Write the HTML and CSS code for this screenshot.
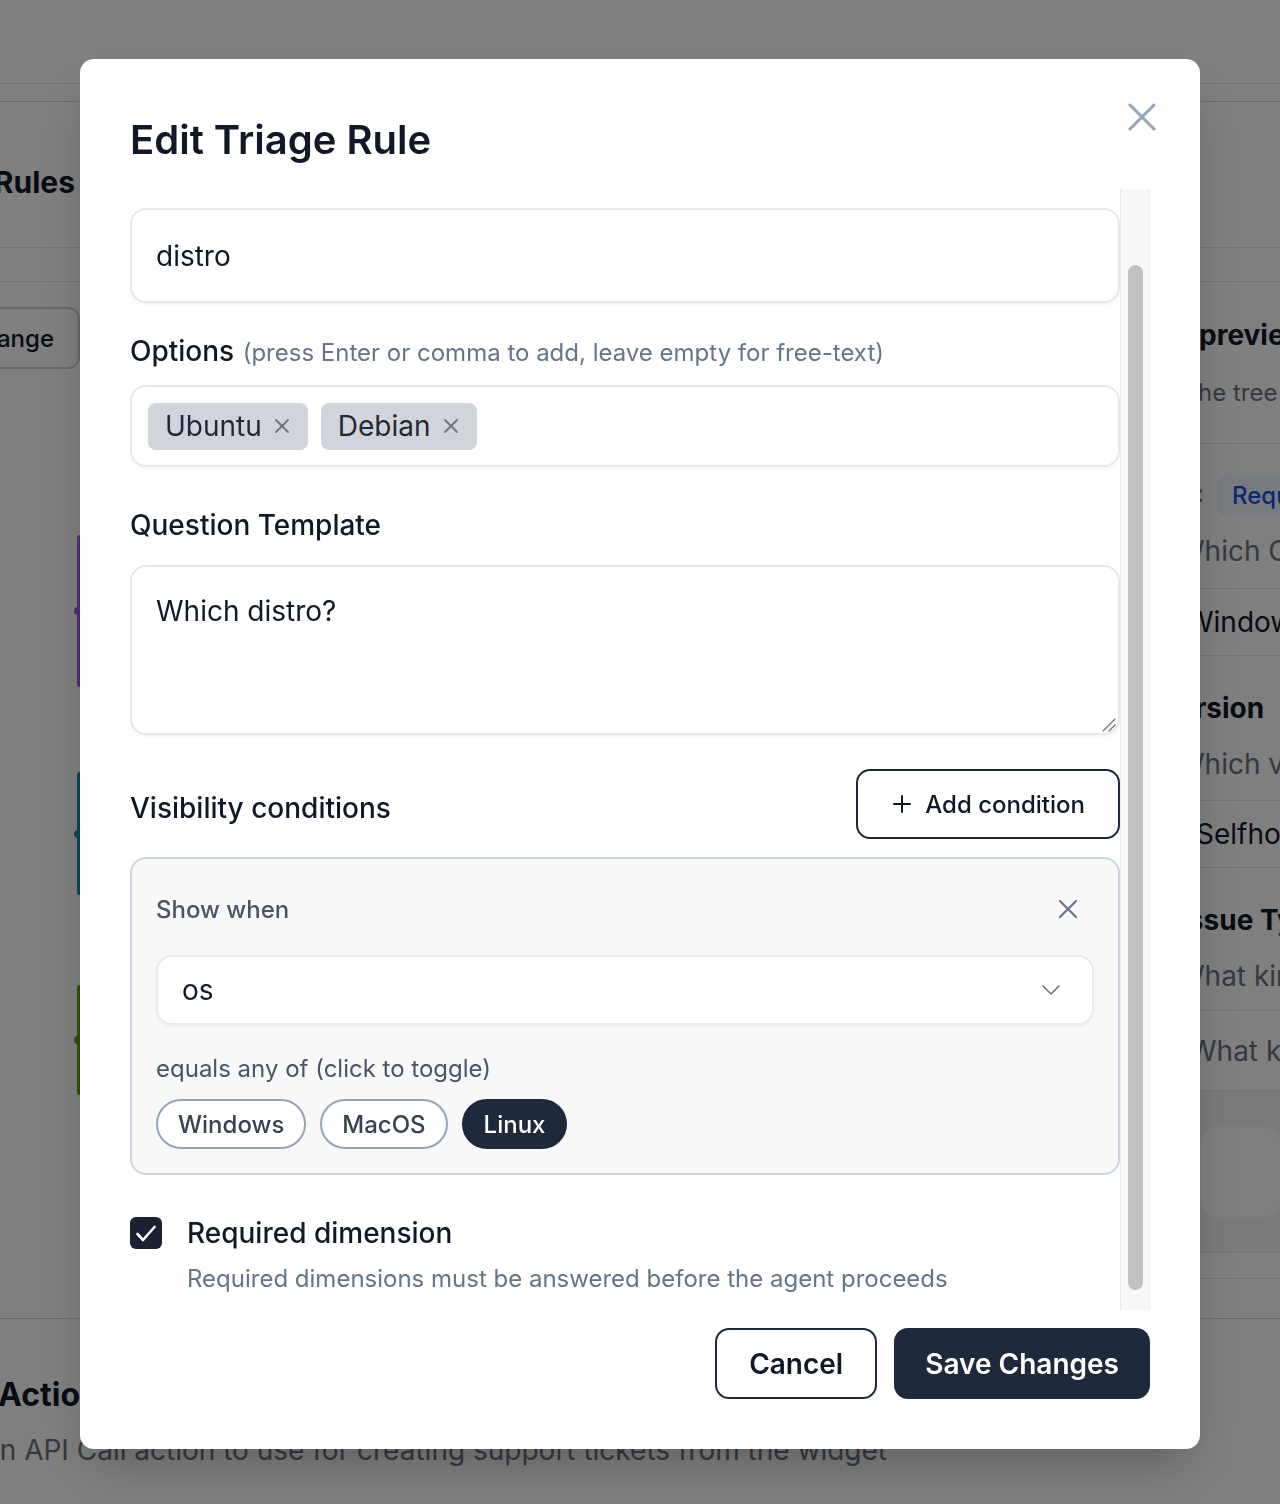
FILE: index.html
```html
<!DOCTYPE html>
<html lang="en">
<head>
<meta charset="utf-8">
<title>Edit Triage Rule</title>
<link rel="stylesheet" href="styles.css">
</head>
<body>
<div class="page">
  <header class="page-top"></header>
  <div class="page-sub"></div>
  <div class="page-title-row">
    <div class="rail rail-title-wrap"><h1 class="page-title">Triage Rules</h1></div>
  </div>
  <nav class="page-tabs"></nav>
  <div class="page-main">
    <div class="rail rail-main">
      <div class="rail-btn-row"><button class="bg-btn">Change</button></div>
      <div class="tree-bar tree-bar--purple"></div>
      <div class="tree-bar tree-bar--teal"></div>
      <div class="tree-bar tree-bar--green"></div>
    </div>
    <div class="center-col"></div>
    <aside class="preview">
      <div class="pv-head">
        <div class="pv-title">Live preview</div>
        <div class="pv-sub">See the tree your customers walk through</div>
      </div>
      <div class="pv-node">
        <div class="pv-badge-row"><span class="pv-key">OS:</span><span class="pv-badge">Required</span></div>
        <div class="pv-text pv-q">Which OS are you using?</div>
      </div>
      <div class="pv-opt pv-o1">Windows</div>
      <div class="pv-node">
        <div class="pv-name pv-n1">Version</div>
        <div class="pv-text pv-q">Which version?</div>
      </div>
      <div class="pv-opt pv-o2">Selfhosted</div>
      <div class="pv-node pv-node--short">
        <div class="pv-name pv-n2">Issue Type</div>
        <div class="pv-text pv-q">What kind of issue?</div>
      </div>
      <div class="pv-opt pv-opt--tall pv-o3 pv-placeholder">What kind of issue?</div>
      <div class="pv-foot"><div class="pv-box"></div></div>
      <div class="pv-end"></div>
    </aside>
  </div>
  <section class="page-action">
    <h2 class="action-title">Action</h2>
    <p class="action-desc">an API Call action to use for creating support tickets from the widget</p>
  </section>
</div>

<div class="overlay">
  <div class="modal" role="dialog" aria-labelledby="modal-title">
    <div class="modal-header">
      <h2 class="modal-title" id="modal-title">Edit Triage Rule</h2>
      <button class="close-btn" aria-label="Close">
        <svg width="28" height="28" viewBox="0 0 28 28" fill="none" stroke="#94a3b8" stroke-width="3" stroke-linecap="round"><line x1="2" y1="2" x2="26" y2="26"/><line x1="26" y1="2" x2="2" y2="26"/></svg>
      </button>
    </div>

    <div class="modal-body">
      <div class="body-content">
        <input class="text-input" type="text" value="distro" aria-label="Dimension name">

        <div class="field-label field-label--spaced">Options <span class="hint">(press Enter or comma to add, leave empty for free-text)</span></div>
        <div class="tag-box">
          <span class="tag">Ubuntu<svg class="tag-x" width="16" height="16" viewBox="0 0 16 16" fill="none" stroke="#6b7280" stroke-width="1.8" stroke-linecap="round"><line x1="2" y1="2" x2="14" y2="14"/><line x1="14" y1="2" x2="2" y2="14"/></svg></span>
          <span class="tag">Debian<svg class="tag-x" width="16" height="16" viewBox="0 0 16 16" fill="none" stroke="#6b7280" stroke-width="1.8" stroke-linecap="round"><line x1="2" y1="2" x2="14" y2="14"/><line x1="14" y1="2" x2="2" y2="14"/></svg></span>
        </div>

        <label class="field-label field-label--question">Question Template</label>
        <div class="textarea-wrap">
          <textarea class="text-area">Which distro?</textarea>
          <svg class="resize-grip" width="14" height="14" viewBox="0 0 14 14" fill="none" stroke="#6b7280" stroke-width="1.2" stroke-linecap="round"><line x1="13" y1="1" x2="1" y2="13"/><line x1="13" y1="7" x2="7" y2="13"/></svg>
        </div>

        <div class="vis-head">
          <div class="vis-label">Visibility conditions</div>
          <button class="add-btn">
            <svg width="18" height="18" viewBox="0 0 18 18" fill="none" stroke="#111827" stroke-width="2" stroke-linecap="round"><line x1="9" y1="1" x2="9" y2="17"/><line x1="1" y1="9" x2="17" y2="9"/></svg>
            <span>Add condition</span>
          </button>
        </div>

        <div class="cond-box">
          <div class="cond-head">
            <span class="cond-title">Show when</span>
            <button class="cond-close" aria-label="Remove condition">
              <svg width="18" height="18" viewBox="0 0 18 18" fill="none" stroke="#64748b" stroke-width="2.2" stroke-linecap="round"><line x1="1" y1="1" x2="17" y2="17"/><line x1="17" y1="1" x2="1" y2="17"/></svg>
            </button>
          </div>
          <div class="select" role="combobox">
            <span>os</span>
            <svg width="18" height="10" viewBox="0 0 18 10" fill="none" stroke="#6b7280" stroke-width="1.6" stroke-linecap="round" stroke-linejoin="round"><polyline points="1,1 9,9 17,1"/></svg>
          </div>
          <div class="cond-sub">equals any of (click to toggle)</div>
          <div class="pills">
            <button class="pill">Windows</button>
            <button class="pill">MacOS</button>
            <button class="pill pill--on">Linux</button>
          </div>
        </div>

        <div class="req-row">
          <span class="checkbox">
            <svg width="32" height="32" viewBox="0 0 32 32" fill="none" stroke="#ffffff" stroke-width="2.6" stroke-linecap="round" stroke-linejoin="round"><polyline points="7.5,17 13,23 24.5,10"/></svg>
          </span>
          <span class="req-label">Required dimension</span>
        </div>
        <p class="req-desc">Required dimensions must be answered before the agent proceeds</p>
      </div>
      <div class="scroll-track" aria-hidden="true"><div class="scroll-thumb"></div></div>
    </div>

    <div class="modal-footer">
      <button class="btn btn--outline">Cancel</button>
      <button class="btn btn--primary">Save Changes</button>
    </div>
  </div>
</div>
</body>
</html>
```

FILE: styles.css
```css
*, *::before, *::after { box-sizing: border-box; }
html, body { margin: 0; padding: 0; }
body {
  width: 1280px;
  height: 1504px;
  overflow: hidden;
  font-family: Inter, "Noto Sans", "Liberation Sans", sans-serif;
  color: #111827;
  background: #ffffff;
}
button, input, textarea { font-family: inherit; }

/* ---------- background page ---------- */
.page { height: 1504px; overflow: hidden; }
.page-top { height: 84px; border-bottom: 1px solid #e5e7eb; }
.page-sub { height: 18px; border-bottom: 1px solid #d4d7dd; }
.page-title-row { height: 146px; border-bottom: 1px solid #e5e7eb; }
.page-tabs { height: 34px; border-bottom: 1px solid #e5e7eb; }

.rail { width: 80px; overflow: hidden; }
.rail-title-wrap { display: flex; justify-content: flex-end; padding-top: 58px; padding-right: 5px; }
.page-title { margin: 0; font-size: 30px; line-height: 44px; font-weight: 700; white-space: nowrap; color: #111827; }

.page-main {
  display: grid;
  grid-template-columns: 80px 1fr 150px;
  height: 1036px;
}
.rail-main { display: flex; flex-direction: column; overflow: visible; }
.rail-btn-row { display: flex; justify-content: flex-end; padding-top: 25px; overflow: hidden; }
.bg-btn {
  flex-shrink: 0;
  height: 62px;
  padding: 0 24px;
  border: 2px solid #cdd2da;
  border-radius: 12px;
  background: #ffffff;
  font-size: 24px;
  font-weight: 500;
  color: #111827;
  white-space: nowrap;
}
.tree-bar { align-self: flex-end; width: 3px; border-radius: 3px 0 0 3px; position: relative; }
.tree-bar::before {
  content: "";
  position: absolute;
  left: -3px;
  top: 50%;
  width: 8px;
  height: 8px;
  margin-top: -4px;
  border-radius: 50%;
  background: inherit;
}
.tree-bar--purple { margin-top: 166px; height: 152px; background: #a855f7; }
.tree-bar--teal { margin-top: 85px; height: 123px; background: #0891b2; }
.tree-bar--green { margin-top: 90px; height: 110px; background: #65a30d; }

.preview { min-width: 0; overflow: hidden; border-left: 1px solid #e5e7eb; display: flex; flex-direction: column; }
.preview > * { white-space: nowrap; }
.pv-head { height: 162px; border-bottom: 1px solid #e5e7eb; padding-top: 33px; flex: none; }
.pv-title { font-size: 28px; line-height: 40px; font-weight: 700; padding-left: 5px; }
.pv-sub { margin-top: 22px; font-size: 24px; line-height: 32px; color: #6b7280; padding-left: 9px; }
.pv-node { height: 145px; border-bottom: 1px solid #e5e7eb; padding-top: 31px; flex: none; }
.pv-node--short { height: 143px; }
.pv-badge-row { display: flex; align-items: center; height: 40px; }
.pv-key { width: 73px; text-align: right; font-size: 24px; color: #6b7280; flex: none; }
.pv-badge {
  margin-left: 13px;
  height: 40px;
  padding: 0 15px;
  display: inline-flex;
  align-items: center;
  background: #eff6ff;
  color: #1d4ed8;
  font-size: 24px;
  font-weight: 500;
  border-radius: 8px;
  flex: none;
}
.pv-text { margin-top: 16px; font-size: 28px; line-height: 40px; color: #6b7280; }
.pv-q { padding-left: 46px; }
.pv-name { font-size: 28px; line-height: 40px; font-weight: 700; padding-top: 1px; }
.pv-n1 { padding-left: 28px; }
.pv-n2 { padding-left: 49px; }
.pv-opt { height: 67px; border-bottom: 1px solid #e5e7eb; display: flex; align-items: center; font-size: 28px; color: #111827; flex: none; }
.pv-opt--tall { height: 80px; }
.pv-o1 { padding-left: 55px; }
.pv-o2 { padding-left: 65px; }
.pv-o3 { padding-left: 58px; }
.pv-placeholder { color: #6b7280; }
.pv-foot { height: 162px; background: #f3f4f6; border-bottom: 1px solid #e5e7eb; padding-top: 36px; flex: none; }
.pv-box { height: 90px; margin-left: 70px; background: #ffffff; border-radius: 16px; }
.pv-end { height: 26px; border-bottom: 1px solid #e5e7eb; flex: none; }

.page-action { border-top: 1px solid #d4d7dd; padding-top: 54px; }
.action-title { margin: 0; font-size: 32px; line-height: 44px; font-weight: 700; text-indent: -2px; white-space: nowrap; }
.action-desc { margin: 13px 0 0; font-size: 28px; line-height: 40px; color: #6b7280; text-indent: -16px; white-space: nowrap; }

/* ---------- modal ---------- */
.overlay {
  position: fixed;
  inset: 0;
  background: rgba(0, 0, 0, 0.5);
  display: flex;
  justify-content: center;
  align-items: flex-start;
  padding-top: 59px;
}
.modal {
  position: relative;
  width: 1120px;
  height: 1390px;
  background: #ffffff;
  border-radius: 14px;
  box-shadow: 0 25px 50px -12px rgba(0, 0, 0, 0.25);
  display: flex;
  flex-direction: column;
  padding: 0 50px 50px;
}
.modal-header { flex: none; height: 130px; padding-top: 53px; }
.modal-title { margin: 0; font-size: 40px; line-height: 56px; font-weight: 600; color: #111827; }
.close-btn {
  position: absolute;
  top: 44px;
  right: 44px;
  width: 28px;
  height: 28px;
  padding: 0;
  border: 0;
  background: none;
}
.close-btn svg { display: block; }

.modal-body { flex: 1; min-height: 0; display: flex; }
.body-content { flex: 1; min-width: 0; overflow: hidden; padding-top: 19px; }
.scroll-track {
  flex: none;
  width: 30px;
  background: #f8f8f8;
  border-left: 1px solid #e8e8e8;
  border-right: 1px solid #ededed;
  padding: 76px 0 0 7px;
}
.scroll-thumb { width: 15px; height: 1025px; background: #c1c1c1; border-radius: 8px; }

.field-label {
  display: block;
  font-size: 28px;
  line-height: 40px;
  font-weight: 500;
  color: #111827;
  margin-bottom: 14px;
}
.field-label--spaced { margin-top: 28px; }
.field-label--question { margin-top: 38px; margin-bottom: 20px; }
.hint { font-size: 24px; line-height: 24px; font-weight: 400; color: #64748b; margin-left: 1px; }

.text-input {
  display: block;
  width: 100%;
  height: 95px;
  padding: 0 24px;
  border: 2px solid #e5e7eb;
  border-radius: 16px;
  background: #ffffff;
  font-size: 28px;
  color: #111827;
  outline: none;
  box-shadow: 0 2px 3px rgba(0, 0, 0, 0.04);
}

.tag-box {
  display: flex;
  align-items: center;
  gap: 13px;
  height: 82px;
  padding: 0 16px;
  border: 2px solid #e5e7eb;
  border-radius: 16px;
  box-shadow: 0 2px 3px rgba(0, 0, 0, 0.04);
}
.tag {
  display: inline-flex;
  align-items: center;
  gap: 12px;
  height: 47px;
  padding: 0 18px 0 17px;
  background: #d1d5db;
  border-radius: 8px;
  font-size: 28px;
  color: #1f2937;
}
.tag-x { display: block; }

.textarea-wrap { position: relative; }
.text-area {
  display: block;
  width: 100%;
  height: 170px;
  padding: 24px;
  border: 2px solid #e5e7eb;
  border-radius: 16px;
  font-size: 28px;
  line-height: 40px;
  color: #111827;
  resize: none;
  outline: none;
  box-shadow: 0 2px 3px rgba(0, 0, 0, 0.04);
}
.resize-grip { position: absolute; right: 4px; bottom: 3px; display: block; }

.vis-head {
  margin-top: 34px;
  height: 70px;
  display: flex;
  align-items: center;
  justify-content: space-between;
}
.vis-label { margin-top: 8px; font-size: 28px; line-height: 40px; font-weight: 500; }
.add-btn {
  height: 70px;
  padding: 0 33px 0 35px;
  display: inline-flex;
  align-items: center;
  gap: 14px;
  border: 2px solid #1e293b;
  border-radius: 14px;
  background: #ffffff;
  font-size: 24px;
  font-weight: 500;
  color: #111827;
}
.add-btn svg { display: block; }

.cond-box {
  margin-top: 18px;
  padding: 24px;
  background: #f8f8f9;
  border: 2px solid #cbd5e1;
  border-radius: 16px;
}
.cond-head { height: 52px; display: flex; align-items: center; justify-content: space-between; }
.cond-title { font-size: 24px; font-weight: 500; color: #475569; }
.cond-close {
  width: 36px;
  height: 36px;
  margin-right: 8px;
  padding: 0;
  border: 0;
  background: none;
  display: flex;
  align-items: center;
  justify-content: center;
}
.select {
  margin-top: 20px;
  height: 70px;
  padding: 0 32px 0 24px;
  display: flex;
  align-items: center;
  justify-content: space-between;
  background: #ffffff;
  border: 2px solid #e9eaee;
  border-radius: 16px;
  font-size: 28px;
  color: #111827;
  box-shadow: 0 2px 3px rgba(0, 0, 0, 0.04);
}
.select svg { display: block; }
.cond-sub { margin-top: 28px; font-size: 24px; line-height: 32px; color: #475569; }
.pills { margin-top: 14px; display: flex; gap: 14px; }
.pill {
  height: 50px;
  padding: 0 20px;
  border: 2px solid #94a3b8;
  border-radius: 999px;
  background: #ffffff;
  font-size: 24px;
  font-weight: 500;
  color: #374151;
}
.pill--on { background: #1e293b; border-color: #1e293b; color: #ffffff; }

.req-row { margin-top: 38px; height: 40px; display: flex; align-items: center; gap: 25px; }
.checkbox {
  width: 32px;
  height: 32px;
  border-radius: 6px;
  background: #1a2232;
  flex: none;
}
.checkbox svg { display: block; }
.req-label { font-size: 28px; line-height: 40px; font-weight: 500; color: #111827; }
.req-desc { margin: 10px 0 0 57px; font-size: 24px; line-height: 32px; color: #64748b; }

.modal-footer { flex: none; margin-top: 18px; display: flex; justify-content: flex-end; gap: 17px; }
.btn {
  height: 71px;
  padding: 0 32px;
  border: 2px solid #1e293b;
  border-radius: 14px;
  font-size: 28px;
  font-weight: 600;
}
.btn--outline { background: #ffffff; color: #111827; }
.btn--primary { background: #1e293b; color: #ffffff; padding: 0 29px; }
```
